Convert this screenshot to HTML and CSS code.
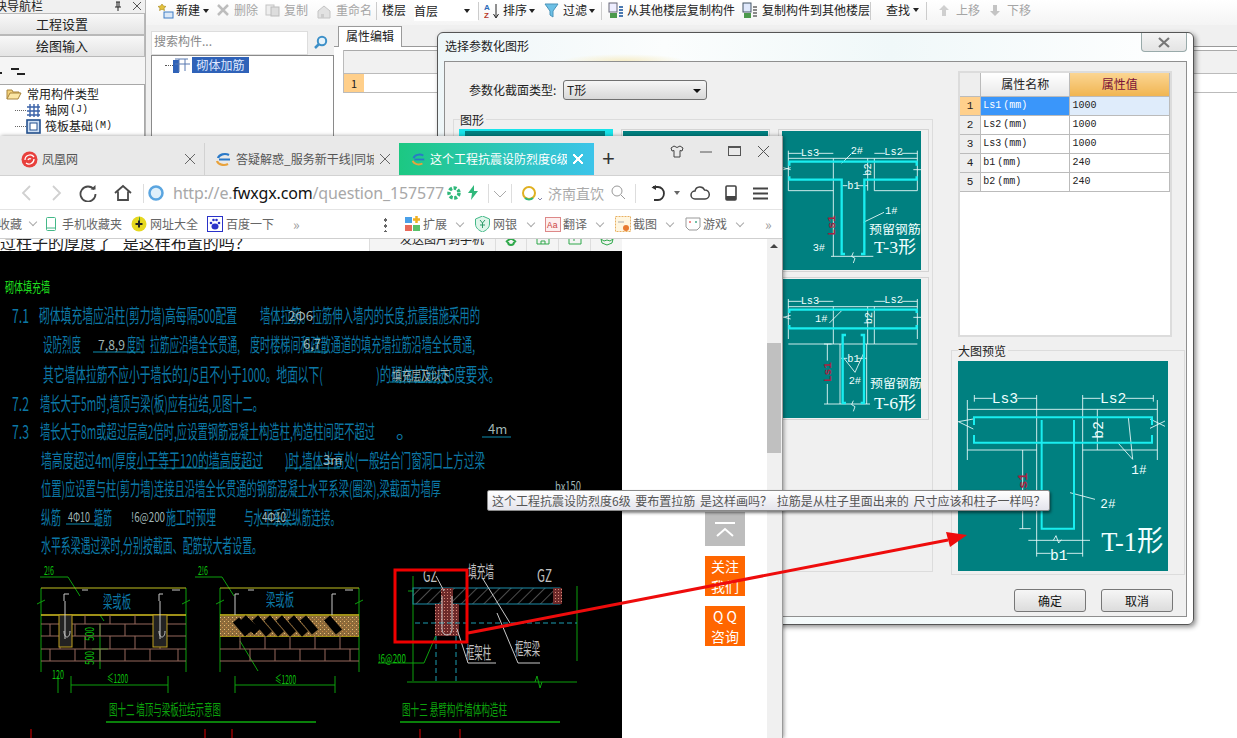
FILE: index.html
```html
<!DOCTYPE html>
<html lang="zh">
<head>
<meta charset="utf-8">
<title>选择参数化图形</title>
<link rel="stylesheet" href="styles.css">
</head>
<body>
<svg class="defs" width="0" height="0">
  <defs>
    <pattern id="hatch" width="8" height="8" patternUnits="userSpaceOnUse" patternTransform="rotate(-45)"><line x1="0" y1="0" x2="8" y2="0" stroke="#9a9a9a" stroke-width="1"/></pattern>
    <pattern id="speck" width="3" height="3" patternUnits="userSpaceOnUse"><rect width="3" height="3" fill="#6d2a2a"/><rect width="1" height="1" fill="#d98a7a"/></pattern>
    <pattern id="gravel" width="4" height="4" patternUnits="userSpaceOnUse"><rect width="4" height="4" fill="#8c6a3a"/><rect width="1" height="1" fill="#e8c27a"/><rect x="2" y="2" width="1" height="1" fill="#c84"/></pattern>
  </defs>
</svg>
<div class="desktop">

  <div class="app">
    <aside class="nav">
      <div class="nav-head"><span class="nav-title">模块导航栏</span><span class="nav-ctl">
        <svg width="10" height="11" viewBox="0 0 10 11"><path d="M3 1h4M4 1v5M6 1v5M2 6h6M5 6v4" stroke="#222" fill="none"/></svg>
        <svg width="10" height="10" viewBox="0 0 10 10"><path d="M1 1l8 8M9 1l-8 8" stroke="#555" fill="none"/></svg></span></div>
      <div class="nav-btn">工程设置</div>
      <div class="nav-btn">绘图输入</div>
      <div class="nav-tools"><i class="dash d1"></i><i class="dash d2"></i><i class="dash d3"></i></div>
      <div class="nav-tree">
        <div class="nav-node n0"><svg width="16" height="12" viewBox="0 0 16 12"><path d="M1 11V2h5l1 2h6v2" fill="#f4d27a" stroke="#a8843c"/><path d="M1 11l3-6h11l-3 6z" fill="#fbe6a4" stroke="#a8843c"/></svg>常用构件类型</div>
        <div class="nav-node n1"><i class="dots"></i><svg width="15" height="15" viewBox="0 0 15 15"><path d="M1 4h13M1 8h13M1 12h13M4 1v13M8 1v13M12 1v13" stroke="#3a62a8" fill="none" stroke-width="1.4"/></svg>轴网<small>(J)</small></div>
        <div class="nav-node n1"><i class="dots"></i><svg width="15" height="15" viewBox="0 0 15 15"><rect x="1" y="1" width="13" height="13" fill="#cfe0f4" stroke="#24518f" stroke-width="1.6"/><rect x="4" y="4" width="7" height="7" fill="#fff" stroke="#24518f"/></svg>筏板基础<small>(M)</small></div>
      </div>
    </aside>

    <div class="main">
      <div class="toolbar">
        <span class="tb w-new"><svg width="16" height="16" viewBox="0 0 16 16"><path d="M4 1l1.5 2L8 3.500 6 5l.5 2.500L4 6.300 1.500 7.500 2 5 0 3.500 2.500 3z" fill="#e3c13c" stroke="#a88a1c" stroke-width=".6"/><rect x="6" y="9" width="9" height="6" fill="#dbe8f7" stroke="#3f7cc4"/></svg>新建<i class="caret"></i></span>
        <span class="tb off w-del"><svg width="14" height="14" viewBox="0 0 14 14"><path d="M2 2l10 10M12 2L2 12" stroke="#bdbdbd" stroke-width="2.500"/></svg>删除</span>
        <span class="tb off w-copy"><svg width="15" height="14" viewBox="0 0 15 14"><rect x="1" y="2" width="8" height="10" fill="#eee" stroke="#c4c4c4"/><rect x="6" y="4" width="8" height="9" fill="#ddd" stroke="#bbb"/></svg>复制</span>
        <span class="tb off w-ren"><svg width="16" height="16" viewBox="0 0 16 16"><path d="M2 15V8l6-5 6 5v7z" fill="#e2e2e2" stroke="#c4c4c4"/><path d="M5 15v-4h3v4" fill="#ccc"/></svg>重命名</span>
        <i class="sep s-a"></i>
        <span class="tb w-fl">楼层</span>
        <span class="floor">首层<i class="caret"></i></span>
        <i class="sep s-b"></i>
        <span class="tb w-sort"><svg width="16" height="16" viewBox="0 0 16 16"><text x="0" y="7" class="az">A</text><text x="0" y="15" class="za">Z</text><path d="M12 1v13M9.500 11l2.500 4 2.500-4" stroke="#222" fill="none"/></svg>排序<i class="caret"></i></span>
        <span class="tb w-flt"><svg width="15" height="15" viewBox="0 0 15 15"><path d="M1 1h13L9 8v6L6 12V8z" fill="#6cc0e6" stroke="#4a93b8"/></svg>过滤<i class="caret"></i></span>
        <i class="sep s-c"></i>
        <span class="tb w-cp1"><svg width="16" height="17" viewBox="0 0 16 17"><rect x="1" y="1" width="8" height="9" fill="#eef" stroke="#667"/><path d="M2 11h7v5H2z" fill="#4c9a4c"/><path d="M11 5h4M11 8h4M11 11h4M11 14h4" stroke="#4a78b0" stroke-width="2"/></svg>从其他楼层复制构件</span>
        <span class="tb w-cp2"><svg width="16" height="17" viewBox="0 0 16 17"><rect x="1" y="1" width="8" height="9" fill="#dfe8fb" stroke="#456"/><path d="M2 11h7v5H2z" fill="#4c9a4c"/><path d="M11 5h4M11 8h4M11 11h4M11 14h4" stroke="#8a8a8a" stroke-width="2"/></svg>复制构件到其他楼层</span>
        <i class="sep s-d"></i>
        <span class="tb w-find">查找<i class="caret"></i></span>
        <i class="sep s-e"></i>
        <span class="tb off w-up"><svg width="10" height="11" viewBox="0 0 10 11"><path d="M5 0l5 5H7v6H3V5H0z" fill="#cfcfcf"/></svg>上移</span>
        <span class="tb off w-down"><svg width="10" height="11" viewBox="0 0 10 11"><path d="M5 11L0 6h3V0h4v6h3z" fill="#c4c4c4"/></svg>下移</span>
      </div>
      <div class="work">
        <div class="finder">
          <div class="search"><span class="search-ph">搜索构件...</span><svg width="15" height="15" viewBox="0 0 15 15"><circle cx="9" cy="6" r="4.200" fill="#e6f3fb" stroke="#3d90c8" stroke-width="2"/><path d="M6 9l-4 4" stroke="#3d90c8" stroke-width="2.500"/></svg></div>
          <div class="ftree"><div class="fnode"><i class="fdots"></i><svg width="18" height="16" viewBox="0 0 18 16"><rect x="0" y="3" width="6" height="13" fill="#2f62b8"/><path d="M2 2h13M6 2v13M12 2v12M2 7h15" stroke="#5878b0" fill="none"/></svg><span class="fsel">砌体加筋</span></div></div>
        </div>
        <div class="props">
          <div class="tabrow"><span class="ptab">属性编辑</span></div>
          <div class="pgrid">
            <div class="pg-head"><i class="pg-n"></i></div>
            <div class="pg-row"><i class="pg-n on">1</i></div>
          </div>
        </div>
      </div>
    </div>
  </div>

  <section class="dialog">
    <div class="dlg-title">选择参数化图形<span class="dlg-close"><svg width="12" height="11" viewBox="0 0 12 11"><path d="M1 1l10 9M11 1L1 10" stroke="#777" stroke-width="2.200" fill="none"/></svg></span></div>
    <div class="dlg-body">
      <div class="dlg-cols">
        <div class="dlg-left">
          <div class="type-row"><label>参数化截面类型:</label><span class="select">T形<i class="sel-arrow"></i></span></div>
          <div class="group g-shapes">
            <span class="legend">图形</span>
            <div class="thumbs">
              <div class="thumb on"><div class="teal"></div></div>
              <div class="thumb"><div class="teal"></div></div>
              <div class="thumb t3">
                <svg class="teal-svg" width="139" height="139" viewBox="36 36 417 417">
                  <g class="w"><path d="M55 118H442M55 215H190M313 215H442M55 95V215M442 95V215M190 118V412M313 118V215M55 103H95M145 103H190M313 103H345M395 103H442M215 133L243 105M293 118V215M213 200H232M262 200H293M280 310L342 280M183 412H310M250 400l-5 12 10 6-5 14M40 152l22-6M62 152l-22-6M430 152h25"/></g>
                  <g class="c"><path d="M58 140V128H440V140M58 172V182H215V405H225M440 172V182H283V405H273"/></g>
                  <text x="92" y="110" class="lbl">Ls3</text><text x="343" y="108" class="lbl">Ls2</text><text x="242" y="104" class="lbl">2#</text><text x="232" y="210" class="lbl">b1</text><text x="345" y="285" class="lbl">1#</text><text x="128" y="395" class="lbl">3#</text>
                  <text transform="translate(304 170) rotate(-90)" class="lbl">b2</text>
                  <text transform="translate(196 350) rotate(-90)" class="red">Ls1</text>
                  <text x="297" y="345" class="hz" textLength="155" lengthAdjust="spacingAndGlyphs">预留钢筋</text>
                  <text x="312" y="403" class="big" textLength="126" lengthAdjust="spacingAndGlyphs">T-3形</text>
                </svg>
              </div>
              <div class="thumb"></div>
              <div class="thumb"></div>
              <div class="thumb t3">
                <svg class="teal-svg" width="139" height="139" viewBox="36 480 417 417">
                  <g class="w"><path d="M55 563H442M55 675H190M313 675H442M55 540V660M442 540V660M190 563V675M313 563V675M190 675H313M210 675V855M290 675V855M55 547H95M145 547H190M313 547H345M395 547H442M162 675H185M162 855H300M172 675V725M172 795V855M293 563V675M213 718H232M262 718H290M222 718L255 760L280 705M178 612L215 575M40 595l22-6M62 600l-22-6M430 595h25M250 845l-5 12 10 6-5 14"/></g>
                  <g class="c"><path d="M58 582V572H440V582M58 618V628H440V618M228 648H218V852H228M272 648H282V852H272"/></g>
                  <text x="92" y="554" class="lbl">Ls3</text><text x="343" y="552" class="lbl">Ls2</text><text x="135" y="608" class="lbl">1#</text><text x="232" y="728" class="lbl">b1</text><text x="236" y="795" class="lbl">2#</text>
                  <text transform="translate(306 616) rotate(-90)" class="lbl">b2</text>
                  <text transform="translate(184 790) rotate(-90)" class="red">Ls1</text>
                  <text x="300" y="808" class="hz" textLength="155" lengthAdjust="spacingAndGlyphs">预留钢筋</text>
                  <text x="312" y="870" class="big" textLength="126" lengthAdjust="spacingAndGlyphs">T-6形</text>
                </svg>
              </div>
            </div>
          </div>
        </div>
        <div class="dlg-right">
          <table class="ptable">
            <thead><tr><th class="rn"></th><th class="nm">属性名称</th><th class="val">属性值</th></tr></thead>
            <tbody>
              <tr class="cur"><td class="rn">1</td><td class="nm">Ls1<small>(mm)</small></td><td class="v">1000</td></tr>
              <tr><td class="rn">2</td><td class="nm">Ls2<small>(mm)</small></td><td class="v">1000</td></tr>
              <tr><td class="rn">3</td><td class="nm">Ls3<small>(mm)</small></td><td class="v">1000</td></tr>
              <tr><td class="rn">4</td><td class="nm">b1<small>(mm)</small></td><td class="v">240</td></tr>
              <tr><td class="rn">5</td><td class="nm">b2<small>(mm)</small></td><td class="v">240</td></tr>
            </tbody>
          </table>
          <div class="group g-preview">
            <span class="legend">大图预览</span>
            <svg class="preview" width="210" height="210" viewBox="54 63 630 630">
              <g class="w"><path d="M82 208H652M82 330H290M428 330H652M82 180V360M652 180V360M290 165V650M428 165V650M265 601H450M103 175H158M232 175H290M103 165V185M428 175H482M555 175H640M640 165V185M472 208V330M565 232L578 358L535 310M390 458L465 478M290 640H332M380 640H428M248 330V566M238 566H272M340 601l8-14 8 22 8-10M55 245l45-8M55 245l45 22M630 265l45-22M630 237l45 22"/></g>
              <g class="c c-big"><path d="M102 255V232H636V255M102 285V308H636V285M305 240V566H402V240"/></g>
              <text x="155" y="190" class="lbl lg">Ls3</text><text x="480" y="190" class="lbl lg">Ls2</text>
              <text x="574" y="403" class="lbl lg2">1#</text><text x="481" y="505" class="lbl lg2">2#</text><text x="330" y="660" class="lbl lg">b1</text>
              <text transform="translate(488 296) rotate(-90)" class="lbl lg">b2</text>
              <text transform="translate(262 470) rotate(-90)" class="red lg">Ls1</text>
              <text x="484" y="634" class="big xl" textLength="186" lengthAdjust="spacingAndGlyphs">T-1形</text>
            </svg>
          </div>
        </div>
      </div>
      <div class="dlg-foot"><button class="btn">确定</button><button class="btn">取消</button></div>
    </div>
  </section>

  <section class="browser">
    <div class="tabs">
      <div class="tab t1"><svg width="17" height="17" viewBox="0 0 17 17"><circle cx="8.500" cy="8.500" r="8" fill="#e8403c"/><path d="M4 9a5 5 0 0 1 9-3M5 12a5 5 0 0 0 8-4M7 9a2 2 0 0 1 3-1" stroke="#fff" fill="none" stroke-width="1.300"/></svg><span class="tab-t">凤凰网</span><b class="x"></b></div>
      <div class="tab t2"><svg width="18" height="15" viewBox="0 0 18 15"><path d="M4 6a7 5 0 0 1 11-3" stroke="#2a79c8" fill="none" stroke-width="2.200"/><path d="M3 9a7 5 0 0 0 11 3" stroke="#e8a23c" fill="none" stroke-width="2.200"/><path d="M5 7.500h11" stroke="#2a79c8" stroke-width="2"/></svg><span class="tab-t">答疑解惑_服务新干线|同城</span><b class="x"></b></div>
      <div class="tab t3a"><svg width="16" height="15" viewBox="0 0 18 15"><path d="M4 6a7 5 0 0 1 11-3" stroke="#2a79c8" fill="none" stroke-width="2.200"/><path d="M3 9a7 5 0 0 0 11 3" stroke="#e8a23c" fill="none" stroke-width="2.200"/><path d="M5 7.500h11" stroke="#2a79c8" stroke-width="2"/></svg><span class="tab-t">这个工程抗震设防烈度6级</span><b class="x lt"></b></div>
      <span class="plus">+</span>
      <div class="win-ctl">
        <svg width="14" height="13" viewBox="0 0 14 13"><path d="M4 1L1 3l1 3 2-.500V12h6V5.500L12 6l1-3-3-2-3 1.500z" fill="none" stroke="#444"/></svg>
        <svg width="14" height="13" viewBox="0 0 14 13"><path d="M1 7h12" stroke="#555"/></svg>
        <svg width="14" height="13" viewBox="0 0 14 13"><rect x=".5" y="1.500" width="12" height="9" fill="none" stroke="#555"/><path d="M1 2.500h12" stroke="#555"/></svg>
        <svg width="13" height="13" viewBox="0 0 13 13"><path d="M1 1l11 11M12 1L1 12" stroke="#555" fill="none"/></svg>
      </div>
    </div>
    <div class="addr">
      <svg class="i-back" width="12" height="18" viewBox="0 0 12 18"><path d="M10 2L3 9l7 7" stroke="#d0d0d0" stroke-width="1.800" fill="none"/></svg>
      <svg class="i-fwd" width="12" height="18" viewBox="0 0 12 18"><path d="M2 2l7 7-7 7" stroke="#d0d0d0" stroke-width="1.800" fill="none"/></svg>
      <svg class="i-rel" width="18" height="18" viewBox="0 0 18 18"><path d="M15 5.500A7.500 7.500 0 1 0 16.500 10" stroke="#4a4a4a" stroke-width="1.800" fill="none"/><path d="M11.500 5.500H16.500V1z" fill="#4a4a4a"/></svg>
      <svg class="i-home" width="18" height="17" viewBox="0 0 18 17"><path d="M1 9l8-7 8 7M4 7.500V16h10V7.500" stroke="#4a4a4a" stroke-width="1.800" fill="none"/></svg>
      <i class="a-sep s1"></i>
      <svg class="i-globe" width="16" height="16" viewBox="0 0 16 16"><circle cx="8" cy="8" r="6.500" fill="#dff0fb" stroke="#5aa5e0" stroke-width="2.500"/></svg>
      <span class="url">http://e.<b>fwxgx.com</b>/question_157577</span>
      <svg class="i-sec" width="14" height="14" viewBox="0 0 14 14"><circle cx="7" cy="7" r="5" fill="none" stroke="#2fb87a" stroke-width="3.500" stroke-dasharray="3 1.500"/></svg>
      <svg class="i-bolt" width="10" height="15" viewBox="0 0 10 15"><path d="M6 0L0 8h4L3 15l7-9H6z" fill="#2fb87a"/></svg>
      <i class="a-sep s2"></i>
      <svg class="i-v" width="14" height="8" viewBox="0 0 14 8"><path d="M1 1l6 6 6-6" stroke="#aaa" fill="none"/></svg>
      <i class="a-sep s3"></i>
      <svg class="i-s" width="24" height="18" viewBox="0 0 24 18"><circle cx="8" cy="8" r="6" fill="none" stroke="#e0b020" stroke-width="2"/><path d="M4 13a6 6 0 0 0 8 0" stroke="#2fb87a" stroke-width="2" fill="none"/><path d="M17 13l2 2 2-2" stroke="#88a" fill="none"/></svg>
      <span class="engine">济南直饮</span>
      <svg class="i-mag" width="15" height="15" viewBox="0 0 15 15"><circle cx="6" cy="6" r="5" fill="none" stroke="#999"/><path d="M10 10l4 4" stroke="#999"/></svg>
      <i class="a-sep s4"></i>
      <svg class="i-undo" width="16" height="16" viewBox="0 0 16 16"><path d="M3 2h5a5.500 6 0 0 1 0 13H4" stroke="#333" stroke-width="1.800" fill="none"/><path d="M6 0L1.500 2.500 6 5z" fill="#333"/></svg>
      <i class="caret g"></i>
      <svg class="i-cloud" width="20" height="14" viewBox="0 0 20 14"><path d="M5 13a4 4 0 0 1 0-8 5 5 0 0 1 9.500-1A4.500 4.500 0 0 1 15 13z" stroke="#444" stroke-width="1.500" fill="none"/></svg>
      <svg class="i-phone" width="12" height="16" viewBox="0 0 12 16"><rect x="1" y="1" width="10" height="14" rx="1" fill="none" stroke="#444" stroke-width="1.600"/><rect x="1" y="11" width="10" height="4" fill="#444"/></svg>
      <svg class="i-menu" width="15" height="13" viewBox="0 0 15 13"><path d="M0 1.500h15M0 6.500h15M0 11.500h15" stroke="#444" stroke-width="1.800"/></svg>
    </div>
    <div class="marks">
      <span class="mk m-fav">收藏<i class="chev"></i></span>
      <span class="mk m-ph"><svg width="10" height="14" viewBox="0 0 10 14"><rect x=".5" y=".5" width="9" height="13" rx="1" fill="none" stroke="#44b888"/><path d="M1 11h8" stroke="#44b888"/></svg>手机收藏夹</span>
      <span class="mk m-nav"><svg width="16" height="16" viewBox="0 0 16 16"><circle cx="8" cy="8" r="7.500" fill="#e6d820"/><path d="M8 0a8 8 0 0 1 0 8z" fill="#3a9a3a"/><path d="M8 4.500v7M4.500 8h7" stroke="#222" stroke-width="2"/></svg>网址大全</span>
      <span class="mk m-bd"><svg width="16" height="16" viewBox="0 0 16 16"><rect x=".5" y=".5" width="15" height="15" fill="#fff" stroke="#2a32c8"/><ellipse cx="8" cy="10.500" rx="3.500" ry="3" fill="#2a32c8"/><circle cx="4" cy="7" r="1.300" fill="#2a32c8"/><circle cx="12" cy="7" r="1.300" fill="#2a32c8"/><circle cx="6.500" cy="4" r="1.300" fill="#2a32c8"/><circle cx="9.500" cy="4" r="1.300" fill="#2a32c8"/></svg>百度一下</span>
      <span class="more m-more">»</span>
      <span class="vdots m-dots"></span>
      <span class="mk m-ext"><svg width="16" height="16" viewBox="0 0 16 16"><rect x="0" y="1" width="7" height="6" fill="#4aa0e8"/><rect x="0" y="9" width="7" height="6" fill="#e86a5a"/><rect x="8" y="9" width="7" height="6" fill="#5ac06a"/><path d="M11.500 0v7M8 3.500h7" stroke="#f0b020" stroke-width="2.500"/></svg>扩展<i class="chev"></i></span>
      <span class="mk m-bank"><svg width="15" height="16" viewBox="0 0 15 16"><path d="M7.500 0l7 3v5c0 4-3.500 6.500-7 8-3.500-1.500-7-4-7-8V3z" fill="#dff5ea" stroke="#44b888"/><path d="M5 4l2.500 3L10 4M7.500 7v5M5 9h5" stroke="#2f9a6a" fill="none"/></svg>网银<i class="chev"></i></span>
      <span class="mk m-tr"><svg width="16" height="15" viewBox="0 0 16 15"><rect x=".5" y=".5" width="15" height="14" fill="#fdeeee" stroke="#d88"/><text x="2" y="11" class="aa">Aa</text></svg>翻译<i class="chev"></i></span>
      <span class="mk m-cut"><svg width="16" height="16" viewBox="0 0 16 16"><rect x=".5" y=".5" width="15" height="15" fill="#fff6e0" stroke="#e8b060" stroke-dasharray="2 1"/><circle cx="11" cy="12" r="3" fill="#e87a30"/><path d="M3 6h6" stroke="#aaa"/></svg>截图<i class="chev"></i></span>
      <span class="mk m-game"><svg width="16" height="15" viewBox="0 0 16 15"><path d="M1 1h14v9l-3 3H4L1 10z" fill="#fff" stroke="#999"/><circle cx="5" cy="5" r="1" fill="#e66"/><circle cx="11" cy="5" r="1" fill="#4a8"/></svg>游戏<i class="chev"></i></span>
      <span class="more m-more2">»</span>
    </div>
    <div class="page">
      <div class="page-main">
        <div class="qstrip"><span class="q">过柱子的厚度了&nbsp;&nbsp; 是这样布置的吗？</span>
          <div class="qtools"><span class="qsend">发送图片到手机</span>
            <i><svg width="14" height="12" viewBox="0 0 14 12"><path d="M2 3l5-4 5 4M4 3a3 3 0 0 0 6 0" stroke="#2fa84a" stroke-width="2" fill="none"/></svg></i>
            <i><svg width="14" height="12" viewBox="0 0 14 12"><path d="M1 -2V5H13V-2M5 5V2H9V5" stroke="#2fa84a" fill="none"/></svg></i>
            <i><svg width="14" height="12" viewBox="0 0 14 12"><path d="M1 -2V5H13V-2M6 -2V2" stroke="#2fa84a" fill="none"/></svg></i>
            <i><svg width="14" height="12" viewBox="0 0 14 12"><path d="M1 0l3 2 3-1 3 1 3-2-1 4 -5 2-5-2z" stroke="#2fa84a" fill="none"/></svg></i>
          </div>
        </div>
        <svg class="cad" width="622" height="488" viewBox="0 250 622 488">
          <rect x="0" y="250" width="622" height="488" fill="#000"/>
          <text x="5" y="291" class="tg" textLength="45" lengthAdjust="spacingAndGlyphs">砌体填充墙</text>
          <g class="tb1">
            <text x="12" y="322" textLength="17" lengthAdjust="spacingAndGlyphs">7.1</text>
            <text x="39" y="322" textLength="198" lengthAdjust="spacingAndGlyphs">砌体填充墙应沿柱(剪力墙)高每隔500配置</text>
            <text x="260" y="322" textLength="220" lengthAdjust="spacingAndGlyphs">墙体拉筋。拉筋伸入墙内的长度,抗震措施采用的</text>
            <text x="43" y="351" textLength="38" lengthAdjust="spacingAndGlyphs">设防烈度</text>
            <text x="127" y="351" textLength="18" lengthAdjust="spacingAndGlyphs">度时</text>
            <text x="150" y="351" textLength="90" lengthAdjust="spacingAndGlyphs">拉筋应沿墙全长贯通,</text>
            <text x="250" y="351" textLength="225" lengthAdjust="spacingAndGlyphs">度时楼梯间和疏散通道的填充墙拉筋沿墙全长贯通,</text>
            <text x="43" y="381" textLength="280" lengthAdjust="spacingAndGlyphs">其它墙体拉筋不应小于墙长的1/5且不小于1000。地面以下(</text>
            <text x="376" y="381" textLength="124" lengthAdjust="spacingAndGlyphs">)的砌体拉筋按6度要求。</text>
            <text x="12" y="410" textLength="17" lengthAdjust="spacingAndGlyphs">7.2</text>
            <text x="40" y="410" textLength="223" lengthAdjust="spacingAndGlyphs">墙长大于5m时,墙顶与梁(板)应有拉结,见图十二。</text>
            <text x="12" y="438" textLength="17" lengthAdjust="spacingAndGlyphs">7.3</text>
            <text x="40" y="438" textLength="335" lengthAdjust="spacingAndGlyphs">墙长大于8m或超过层高2倍时,应设置钢筋混凝土构造柱,构造柱间距不超过</text>
            <text x="396" y="438">。</text>
            <text x="41" y="467" textLength="222" lengthAdjust="spacingAndGlyphs">墙高度超过4m(厚度小于等于120的墙高度超过</text>
            <text x="285" y="467" textLength="200" lengthAdjust="spacingAndGlyphs">)时,墙体半高处(一般结合门窗洞口上方过梁</text>
            <text x="41" y="495" textLength="400" lengthAdjust="spacingAndGlyphs">位置)应设置与柱(剪力墙)连接且沿墙全长贯通的钢筋混凝土水平系梁(圈梁),梁截面为墙厚</text>
            <text x="41" y="524" textLength="20" lengthAdjust="spacingAndGlyphs">纵筋</text>
            <text x="94" y="524" textLength="18" lengthAdjust="spacingAndGlyphs">箍筋</text>
            <text x="166" y="524" textLength="50" lengthAdjust="spacingAndGlyphs">施工时预埋</text>
            <text x="244" y="524" textLength="96" lengthAdjust="spacingAndGlyphs">与水平系梁纵筋连接。</text>
            <text x="41" y="552" textLength="221" lengthAdjust="spacingAndGlyphs">水平系梁遇过梁时,分别按截面、配筋较大者设置。</text>
          </g>
          <g class="tw">
            <text x="288" y="320" font-size="12">2Φ6</text>
            <text x="98" y="349" textLength="27" lengthAdjust="spacingAndGlyphs">7,8,9</text>
            <text x="303" y="348" font-size="12">6,7</text>
            <text x="392" y="379" textLength="58" lengthAdjust="spacingAndGlyphs">填充层及以下</text>
            <text x="488" y="433">4m</text>
            <text x="323" y="464" font-size="11">3m</text>
            <text x="68" y="521" textLength="22" lengthAdjust="spacingAndGlyphs">4Φ10</text>
            <text x="131" y="521" textLength="34" lengthAdjust="spacingAndGlyphs">!6@200</text>
            <text x="262" y="521" textLength="24" lengthAdjust="spacingAndGlyphs">4Φ10</text>
            <text x="555" y="490" textLength="26" lengthAdjust="spacingAndGlyphs">bx150</text>
          </g>
          <path class="ul" d="M93 351H145M303 351H328M390 381H452M482 436H511M137 467H263M285 467H340M66 523H100M260 523H295"/>

          <g class="cg">
            <path d="M40 576H68L80 595M195 576H222L234 595M41 587V671M186 587V671M220 587V671M359 587V671M37 603l8-4M182 603l8-4M216 603l8-4M355 603l8-4M71 675V692M168 675V692M71 684H168M235 684H335M235 675V692M335 675V692M58 675V692M100 614L104 620M100 622V668M92 648H108M240 640l18 30"/>
            <path d="M408 590l6 0M413 575V680M407 681H577M577 585V660M378 662H424L440 625M535 681l2-6 3 12 2-6"/>
          </g>
          <path class="cy" d="M41 587H186M220 587H359"/>
          <g class="ye"><path d="M41 614H186M220 614H359M220 635H359"/></g>
          <path class="brick" d="M41 623H186M41 635H186M41 648H186M41 660H186M220 648H359M220 660H359M60 614v9M85 614v9M110 614v9M135 614v9M50 623v12M75 623v12M100 623v12M125 623v12M60 635v13M85 635v13M110 635v13M135 635v13M160 635v13M50 648v12M75 648v12M100 648v12M125 648v12M150 648v12M178 648v12M240 635v13M265 635v13M290 635v13M315 635v13M340 635v13M250 648v12M275 648v12M300 648v12M325 648v12M350 648v12"/>
          <rect x="59" y="614" width="13" height="32" class="slot"/><rect x="153" y="614" width="14" height="32" class="slot"/>
          <path class="wh" d="M64 600v-7h5M82 589h6M65 600v38M64 630c0 8 6 8 6 0M159 600v-7h4M172 589h8M160 600v38M159 630c0 8 6 8 6 0M235 600v-7h4M248 589h6M235 600v14M332 600v-7h4M345 589h8M332 600v14"/>
          <rect x="220" y="615" width="139" height="20" fill="url(#gravel)"/>
          <path class="blk" d="M236 619l12 14M243 617l14 14M255 617l14 16M267 617l14 16M279 617l14 16M291 617l14 16M303 617l12 14M327 617l12 14"/>
          <text x="44" y="574" class="cgt" textLength="10" lengthAdjust="spacingAndGlyphs">2!6</text>
          <text x="198" y="574" class="cgt" textLength="10" lengthAdjust="spacingAndGlyphs">2!6</text>
          <text x="103" y="607" class="cbt" textLength="28" lengthAdjust="spacingAndGlyphs">梁或板</text>
          <text x="266" y="605" class="cbt" textLength="28" lengthAdjust="spacingAndGlyphs">梁或板</text>
          <text x="107" y="682" class="cgt" textLength="21" lengthAdjust="spacingAndGlyphs">≤1200</text>
          <text x="275" y="683" class="cgt" textLength="21" lengthAdjust="spacingAndGlyphs">≤1200</text>
          <text x="52" y="678" class="cgt" textLength="12" lengthAdjust="spacingAndGlyphs">120</text>
          <text transform="translate(94 640) rotate(-90)" class="cgt" textLength="14" lengthAdjust="spacingAndGlyphs">500</text>
          <text transform="translate(94 664) rotate(-90)" class="cgt" textLength="14" lengthAdjust="spacingAndGlyphs">500</text>
          <rect x="413" y="587" width="147" height="16" class="wall"/>
          <rect x="441" y="587" width="12" height="16" fill="url(#speck)"/><rect x="553" y="587" width="9" height="16" fill="url(#speck)"/><rect x="435" y="603" width="24" height="32" fill="url(#speck)"/>
          <path class="dash-c" d="M415 622H577M436 635V680M456 635V680"/>
          <path class="wh" d="M442 595V628c0 8 10 8 10 0V595M436 575L444 590M483 578L510 622M457 628L468 662H496M497 612L518 662H540"/>
          <text x="423" y="581" class="twt" textLength="14" lengthAdjust="spacingAndGlyphs">GZ</text>
          <text x="537" y="581" class="twt" textLength="15" lengthAdjust="spacingAndGlyphs">GZ</text>
          <text x="468" y="577" class="twt" textLength="26" lengthAdjust="spacingAndGlyphs">填充墙</text>
          <text x="466" y="658" class="twt" textLength="25" lengthAdjust="spacingAndGlyphs">框架柱</text>
          <text x="515" y="654" class="twt" textLength="25" lengthAdjust="spacingAndGlyphs">框架梁</text>
          <text x="378" y="662" class="cgt" textLength="28" lengthAdjust="spacingAndGlyphs">!6@200</text>
          <text x="109" y="714" class="title" textLength="112" lengthAdjust="spacingAndGlyphs">图十二 墙顶与梁板拉结示意图</text>
          <text x="402" y="714" class="title" textLength="105" lengthAdjust="spacingAndGlyphs">图十三 悬臂构件墙体构造柱</text>
          <path class="gline" d="M106 721H316M400 721H560"/>
          <path class="rtick" d="M31 728V738M205 728V738M232 728V738M420 728V738M460 728V738"/>
        </svg>
      </div>
      <div class="scroll"><i class="sb-up"></i><i class="sb-thumb"></i></div>
      <div class="side">
        <div class="side-up"><svg width="22" height="15" viewBox="0 0 22 15"><path d="M1 1h20M3 14l8-7 8 7" stroke="#fff" stroke-width="2" fill="none"/></svg></div>
        <div class="side-btn">关注<br>我们</div>
        <div class="side-btn">Q Q<br>咨询</div>
      </div>
    </div>
  </section>

  <div class="tip">这个工程抗震设防烈度6级 要布置拉筋 是这样画吗？ 拉筋是从柱子里面出来的 尺寸应该和柱子一样吗？</div>

  <svg class="mark" width="1237" height="738" viewBox="0 0 1237 738">
    <rect x="395" y="570" width="72" height="72" fill="none" stroke="#f00000" stroke-width="3"/>
    <path d="M468 633L948 540" stroke="#ee0c0c" stroke-width="3"/>
    <path d="M967 535L946 532L950 547z" fill="#ee0c0c"/>
  </svg>
</div>
</body>
</html>
```
FILE: styles.css
```css
* { box-sizing: border-box; }
html, body { margin: 0; padding: 0; }
body { width: 1237px; height: 738px; overflow: hidden; background: #fff; font: 12px/1.2 "Noto Sans CJK SC", "Liberation Sans", sans-serif; color: #222; }
i { font-style: normal; display: block; }
small { font-size: 10px; font-family: "Liberation Mono", monospace; }
.defs { position: absolute; }
.desktop { position: relative; width: 1237px; height: 738px; overflow: hidden; }

/* background application */
.app { display: flex; height: 738px; background: #fff; }
.nav { flex: 0 0 146px; background: #f0f0f0; border-right: 1px solid #b5b5b5; height: 136px; overflow: hidden; }
.nav-head { display: flex; height: 13px; align-items: center; justify-content: space-between; padding-right: 3px; }
.nav-title { margin-left: -17px; font-size: 12px; white-space: nowrap; }
.nav-ctl { display: flex; gap: 9px; }
.nav-btn { height: 22px; line-height: 20px; margin-left: -20px; text-align: center; font-size: 13px; background: linear-gradient(#f8f8f8, #e4e4e4); border: 1px solid #b9b9b9; border-width: 1px 1px 1px 0; }
.nav-tools { position: relative; height: 27px; background: #f5f5f5; display: flex; gap: 3px; padding: 11px 0 0 0; }
.dash { height: 2px; background: #222; }
.d1 { width: 2px; margin-top: 4px; }
.d2 { width: 8px; margin-left: 6px; }
.d3 { width: 8px; margin: 5px 0 0 -5px; }
.nav-tree { background: #fff; border: 1px solid #a8a8a8; border-width: 1px 1px 0 0; height: 52px; padding-top: 1px; }
.nav-node { display: flex; align-items: center; height: 16px; gap: 4px; font-size: 12px; white-space: nowrap; }
.nav-node small { margin-left: -3px; }
.n0 { padding-left: 6px; gap: 5px; }
.n1 { padding-left: 15px; }
.dots { width: 11px; border-top: 1px dotted #666; margin-right: -4px; }

.main { flex: 1; min-width: 0; display: flex; flex-direction: column; }
.toolbar { display: flex; align-items: center; height: 25px; padding: 0 0 4px 12px; background: linear-gradient(#fff, #f4f4f4); white-space: nowrap; }
.tb { display: flex; align-items: center; gap: 2px; font-size: 12px; flex: none; color: #222; }
.tb.off { color: #a5a5a5; gap: 4px; }
.caret { display: inline-block; width: 0; height: 0; margin-left: 1px; border: 3px solid transparent; border-top: 4px solid #222; border-bottom: 0; }
.caret.g { border-top-color: #666; margin: 0; position: absolute; left: 674px; top: 15px; }
.sep { width: 1px; height: 18px; background: #ccc; flex: none; }
.w-new { width: 58px; }
.w-del { width: 49px; }
.w-copy { width: 51px; }
.w-ren { width: 60px; }
.w-fl { width: 32px; margin-left: 5px; }
.floor { display: flex; width: 64px; height: 21px; line-height: 21px; background: #fff; padding-left: 0; flex: none; justify-content: space-between; align-items: center; }
.floor .caret { margin-right: 8px; }
.s-a, .s-b { flex: none; }
.w-sort { width: 60px; margin-left: 5px; gap: 3px; }
.w-sort .caret { margin-left: -1px; }
.w-flt { width: 57px; gap: 4px; }
.w-flt .caret { margin-left: -2px; }
.w-cp1 { width: 134px; margin-left: 6px; gap: 3px; }
.w-cp2 { width: 128px; gap: 4px; }
.w-find { width: 40px; margin-left: 15px; }
.tb.off.w-up { width: 51px; gap: 7px; margin-left: 8px; }
.tb.off.w-down { gap: 7px; }
.s-e { margin-right: 4px; }
.az { font: bold 8px "Liberation Sans", sans-serif; fill: #2a6ab8; }
.za { font: bold 8px "Liberation Sans", sans-serif; fill: #b83a2a; }

.work { display: flex; flex: 1; background: #f0f0f0; }
.finder { flex: 0 0 188px; height: 111px; padding: 5px 0 0 5px; }
.search { display: flex; align-items: center; justify-content: space-between; width: 183px; height: 25px; background: #f0f0f0; padding-right: 6px; }
.search-ph { display: block; width: 157px; height: 24px; line-height: 18px; background: #fff; border: 1px solid #ddd; font-size: 12px; color: #888; padding-left: 2px; }
.ftree { width: 183px; height: 81px; background: #fff; border: 1px solid #8a8a8a; border-bottom: 0; padding-top: 1px; }
.fnode { display: flex; align-items: center; height: 16px; padding-left: 13px; }
.fdots { width: 8px; border-top: 1px dotted #555; }
.fsel { background: #2f62b8; padding: 0 2px; margin-left: 1px; line-height: 16px; font-size: 12px; width: 57px; text-align: center; color: #dfe8ff; }
.props { flex: 1; background: #fff; border-top: 1px solid #f0f0f0; }
.tabrow { height: 21px; background: #f0f0f0; padding-left: 4px; border-bottom: 1px solid #9a9a9a; }
.ptab { display: block; width: 64px; height: 21px; line-height: 17px; background: #fff; border: 1px solid #9a9a9a; border-bottom: 0; text-align: center; font-size: 12px; }
.pgrid { margin: 3px 0 0 9px; border-left: 1px solid #bbb; }
.pg-head { height: 24px; background: #f1f1f1; border-top: 1px solid #aaa; border-bottom: 1px solid #bbb; }
.pg-row { height: 19px; border-bottom: 1px solid #bbb; }
.pg-n { width: 20px; height: 18px; text-align: center; font-size: 11px; line-height: 18px; }
.pg-n.on { background: #ffcf8a; }

/* dialog */
.dialog { position: absolute; left: 437px; top: 32px; width: 757px; height: 593px; background: linear-gradient(90deg, #eef6f8, #fbfdfd 30%, #f0f8f9 60%, #fff); border: 1px solid #555; border-radius: 6px; box-shadow: 2px 2px 5px rgba(0,0,0,.45); padding: 0 6px 7px; display: flex; flex-direction: column; }
.dlg-title { display: flex; justify-content: space-between; height: 28px; padding: 6px 0 0 1px; font-size: 12px; color: #222; background: radial-gradient(ellipse 62px 7px at 180px 28px, #f6edc8, transparent); }
.dlg-close { display: flex; align-items: center; justify-content: center; width: 46px; height: 19px; margin: -6px 0 0; background: linear-gradient(#f4f4f4, #e4e4e4); border: 1px solid #9aa; border-top: 0; border-radius: 0 0 4px 4px; }
.dlg-body { flex: 1; background: #f0f0f0; border: 1px solid #8f8f8f; padding: 9px 0 0 8px; display: flex; flex-direction: column; }
.dlg-cols { display: flex; gap: 18px; height: 505px; }
.dlg-left { width: 480px; }
.type-row { display: flex; align-items: center; gap: 5px; height: 20px; margin-top: 9px; padding-left: 16px; font-size: 12px; }
.type-row label { width: 89px; white-space: nowrap; }
.select { position: relative; display: block; width: 144px; height: 20px; line-height: 18px; padding-left: 3px; background: linear-gradient(#f6f6f6, #d8d8d8); border: 1px solid #707070; border-radius: 3px; }
.sel-arrow { position: absolute; right: 5px; top: 8px; border: 4px solid transparent; border-top: 4px solid #111; border-bottom: 0; }
.group { position: relative; border: 1px solid #dcdcdc; }
.legend { position: absolute; left: 6px; top: -7px; background: #f0f0f0; font-size: 12px; padding-right: 2px; line-height: 13px; }
.g-shapes { margin-top: 19px; height: 453px; padding: 9px 3px 0 5px; }
.thumbs { display: grid; grid-template-columns: 154px 149px 151px; grid-auto-rows: 143px; column-gap: 8px; row-gap: 5px; }
.thumb { border: 1px solid #d4d4d4; background: #f0f0f0; padding: 1px; }
.thumb.on { background: #19e4ea; padding: 1px 7px 1px 5px; border-color: #19e4ea; }
.teal { height: 139px; background: #008080; }
.t3 { padding: 1px 7px 1px 3px; }
.teal-svg { display: block; background: #008080; }
.dlg-right { width: 234px; }
.ptable { margin: 0 0 13px 7px; width: 214px; height: 266px; display: block; background: #fff; border: 2px solid #dcdcdc; border-collapse: collapse; font-size: 12px; table-layout: fixed; }
.ptable th { height: 23px; font-weight: 400; font-size: 12px; background: linear-gradient(#fff, #e8e8e8); border: 1px solid #bbb; border-top: 0; }
.ptable td { height: 19px; padding: 0 0 0 2px; border: 1px solid #bbb; line-height: 16px; font-family: "Liberation Mono", "Noto Sans CJK SC", monospace; font-size: 10px; }
.ptable small { font-size: 10px; margin-left: 2px; }
.ptable .rn { width: 21px; background: #eee; text-align: center; padding: 0; border-left: 0; font-size: 11px; }
.ptable .nm { width: 90px; }
.ptable .val, .ptable .v { width: 101px; }
.ptable th.val { background: linear-gradient(#fbd592, #f0b552); color: #7a1238; }
.ptable .cur .rn { background: #ffd08c; }
.ptable .cur .nm { background: #3a96fa; color: #fff; }
.ptable .cur .v { background: #dfecfb; }
.g-preview { height: 225px; padding: 10px 0 0 6px; }
.preview { display: block; background: #008080; }
.dlg-foot { display: flex; justify-content: flex-end; gap: 15px; padding: 13px 13px 0 0; }
.btn { width: 72px; height: 23px; padding: 0; font: 12px "Noto Sans CJK SC", sans-serif; color: #111; background: linear-gradient(#f6f6f6, #dcdcdc); border: 1px solid #777; border-radius: 3px; }

/* t diagrams */
.w path { fill: none; stroke: #f4ffff; stroke-width: 2.500; }
.c path { fill: none; stroke: #19eef0; stroke-width: 7; }
.c-big path { stroke-width: 6; }
.lbl { font: 31px "Liberation Mono", monospace; fill: #f0ffff; }
.lbl.lg { font-size: 44px; }
.lbl.lg2 { font-size: 38px; }
.red { font: bold 34px "Liberation Mono", monospace; fill: #a82040; }
.red.lg { font-size: 40px; }
.hz { font: 37px "Noto Sans CJK SC", sans-serif; fill: #f0ffff; }
.big { font: 50px "Liberation Serif", "Noto Sans CJK SC", serif; fill: #f0ffff; }
.big.xl { font-size: 84px; }

/* browser */
.browser { position: absolute; left: 0; top: 136px; width: 783px; height: 602px; background: #fff; border-right: 1px solid #9a9a9a; display: flex; flex-direction: column; box-shadow: 1px 0 4px rgba(0,0,0,.4); }
.tabs { position: relative; flex: 0 0 39px; display: flex; align-items: stretch; background: #e9e9e9; border-bottom: 1px solid #d2d2d2; color: #555; font-size: 12px; }
.tab { display: flex; align-items: center; flex: none; white-space: nowrap; }
.t1 { width: 205px; padding-left: 21px; border-right: 1px solid #d2d2d2; margin: 7px 0 0; }
.t2 { width: 194px; padding-left: 9px; margin-top: 7px; }
.t3a { width: 195px; padding-left: 11px; margin-top: 7px; background: linear-gradient(90deg, #1cc882, #3cc4ea); color: #fff; }
.tab-t { margin-left: 4px; flex: 1; min-width: 0; overflow: hidden; font-size: 12px; }
.x { position: relative; width: 10px; height: 10px; margin: 0 9px 0 6px; flex: none; background: linear-gradient(45deg, transparent 46%, #666 46%, #666 54%, transparent 54%), linear-gradient(-45deg, transparent 46%, #666 46%, #666 54%, transparent 54%); }
.x.lt { background: linear-gradient(45deg, transparent 44%, #fff 44%, #fff 56%, transparent 56%), linear-gradient(-45deg, transparent 44%, #fff 44%, #fff 56%, transparent 56%); margin-right: 11px; }
.plus { margin: 6px 0 0 8px; font: 22px/33px "Liberation Sans", sans-serif; color: #333; }
.win-ctl { position: absolute; top: 9px; right: 12px; display: flex; gap: 15px; align-items: center; }
.addr { position: relative; flex: 0 0 34px; background: #fff; border-bottom: 1px solid #e4e4e4; }
.addr > svg, .a-sep, .url, .engine { position: absolute; }
.i-back { left: 20px; top: 8px; }
.i-fwd { left: 51px; top: 8px; }
.i-rel { left: 79px; top: 8px; }
.i-home { left: 114px; top: 8px; }
.a-sep { top: 8px; width: 1px; height: 19px; background: #ddd; }
.s1 { left: 143px; }
.s2 { left: 488px; }
.s3 { left: 511px; }
.s4 { left: 635px; }
.i-globe { left: 148px; top: 9px; }
.url { left: 173px; top: 6px; font: 16px/22px "Noto Sans", sans-serif; color: #a8a8a8; white-space: nowrap; letter-spacing: -.15px; }
.url b { font-weight: 400; color: #111; }
.i-sec { left: 447px; top: 10px; }
.i-bolt { left: 468px; top: 9px; }
.i-v { left: 493px; top: 14px; }
.i-s { left: 521px; top: 9px; }
.engine { left: 548px; top: 8px; font-size: 14px; line-height: 18px; color: #aaa; white-space: nowrap; }
.i-mag { left: 611px; top: 9px; }
.i-undo { left: 650px; top: 9px; }
.i-cloud { left: 690px; top: 10px; }
.i-phone { left: 725px; top: 9px; }
.i-menu { left: 753px; top: 11px; }
.marks { flex: 0 0 29px; display: flex; align-items: center; background: #fff; border-bottom: 1px solid #cfcfcf; color: #666; font-size: 12px; white-space: nowrap; overflow: hidden; padding-left: 0; }
.mk { display: flex; align-items: center; gap: 3px; flex: none; }
.chev { width: 6px; height: 6px; margin: -3px 0 0 8px; border-right: 1px solid #aaa; border-bottom: 1px solid #aaa; transform: rotate(45deg); }
.m-fav { width: 48px; margin-left: -2px; gap: 0; }
.m-ph { width: 85px; gap: 6px; }
.m-nav { width: 76px; }
.m-bd { width: 86px; }
.more { flex: none; color: #999; font-size: 14px; }
.m-more { width: 91px; }
.vdots { flex: none; width: 3px; height: 15px; background: radial-gradient(circle, #666 1.500px, transparent 1.600px) 0 0/3px 6px; margin-right: 18px; }
.m-ext, .m-bank, .m-tr, .m-cut, .m-game { width: 70px; gap: 2px; }
.m-bank { gap: 3px; }
.m-game { width: 76px; }
.m-more2 { margin-left: 4px; }
.page { position: relative; flex: 1; display: flex; min-height: 0; background: #fff; }
.page-main { flex: 0 0 767px; overflow: hidden; }
.qstrip { position: relative; height: 12px; overflow: hidden; display: flex; justify-content: space-between; width: 622px; }
.q { font-size: 16px; line-height: 22px; margin-top: -8px; color: #222; white-space: nowrap; }
.qtools { display: flex; width: 253px; background: #f4f4f4; border-left: 1px solid #ddd; }
.qsend { width: 125px; font-size: 12px; line-height: 18px; margin-top: -9px; padding-left: 30px; white-space: nowrap; }
.qtools i { width: 32px; border-left: 1px solid #ddd; text-align: center; line-height: 0; }
.cad { display: block; }
.cad text { font-family: "Noto Sans CJK SC", sans-serif; }
.tg { font-size: 14px; fill: #1fe01f; }
.tb1 text { font-size: 19px; fill: #0c78a6; }
.tw text { font-size: 13px; fill: #9fb4b4; }
.ul { stroke: #0c8cb0; fill: none; }
.cg path { fill: none; stroke: #0ca00c; }
.cy { stroke: #c0c020; fill: none; }
.ye path { stroke: #d4c020; fill: none; stroke-width: 1.500; }
.brick { stroke: #96685c; fill: none; }
.slot { fill: #222; stroke: #c0a020; }
.wh { stroke: #c8c8c8; fill: none; }
.blk { stroke: #000; stroke-width: 8; fill: none; }
.cgt { font-size: 12px; fill: #0cc00c; }
.cbt { font-size: 17px; fill: #0c78a6; }
.wall { fill: url(#hatch); stroke: #1c8ca8; }
.dash-c { stroke: #1c9cb0; stroke-dasharray: 5 3; fill: none; }
.twt { font-size: 17px; fill: #c0c0c0; }
.title { font-size: 15px; fill: #0ca00c; }
.gline { stroke: #0a800a; stroke-width: 2; fill: none; }
.rtick { stroke: #e00000; fill: none; }
.aa { font: 9px "Liberation Mono", monospace; fill: #c44; }
.scroll { position: relative; flex: 0 0 15px; background: #f0f0f0; }
.sb-up { position: absolute; left: 3px; top: 5px; border: 4px solid transparent; border-bottom: 4px solid #444; border-top: 0; }
.sb-thumb { position: absolute; left: 0; right: 1px; top: 104px; height: 110px; background: #c0c0c0; }
.side { position: absolute; left: 705px; top: 273px; width: 40px; display: flex; flex-direction: column; gap: 10px; }
.side-up { height: 34px; background: #bdbdbd; display: flex; align-items: center; justify-content: center; }
.side-btn { height: 40px; background: #ff6600; color: #fff; font-size: 14px; line-height: 20px; text-align: center; }

.tip { position: absolute; left: 487px; top: 490px; width: 563px; height: 21px; line-height: 19px; padding-left: 4px; word-spacing: 2px; background: linear-gradient(#fff, #e4e4ec); border: 1px solid #8a8a8a; border-radius: 2px; box-shadow: 1px 2px 3px rgba(0,0,0,.5); font-size: 12px; color: #555; white-space: nowrap; overflow: hidden; }
.mark { position: absolute; left: 0; top: 0; pointer-events: none; }
```
